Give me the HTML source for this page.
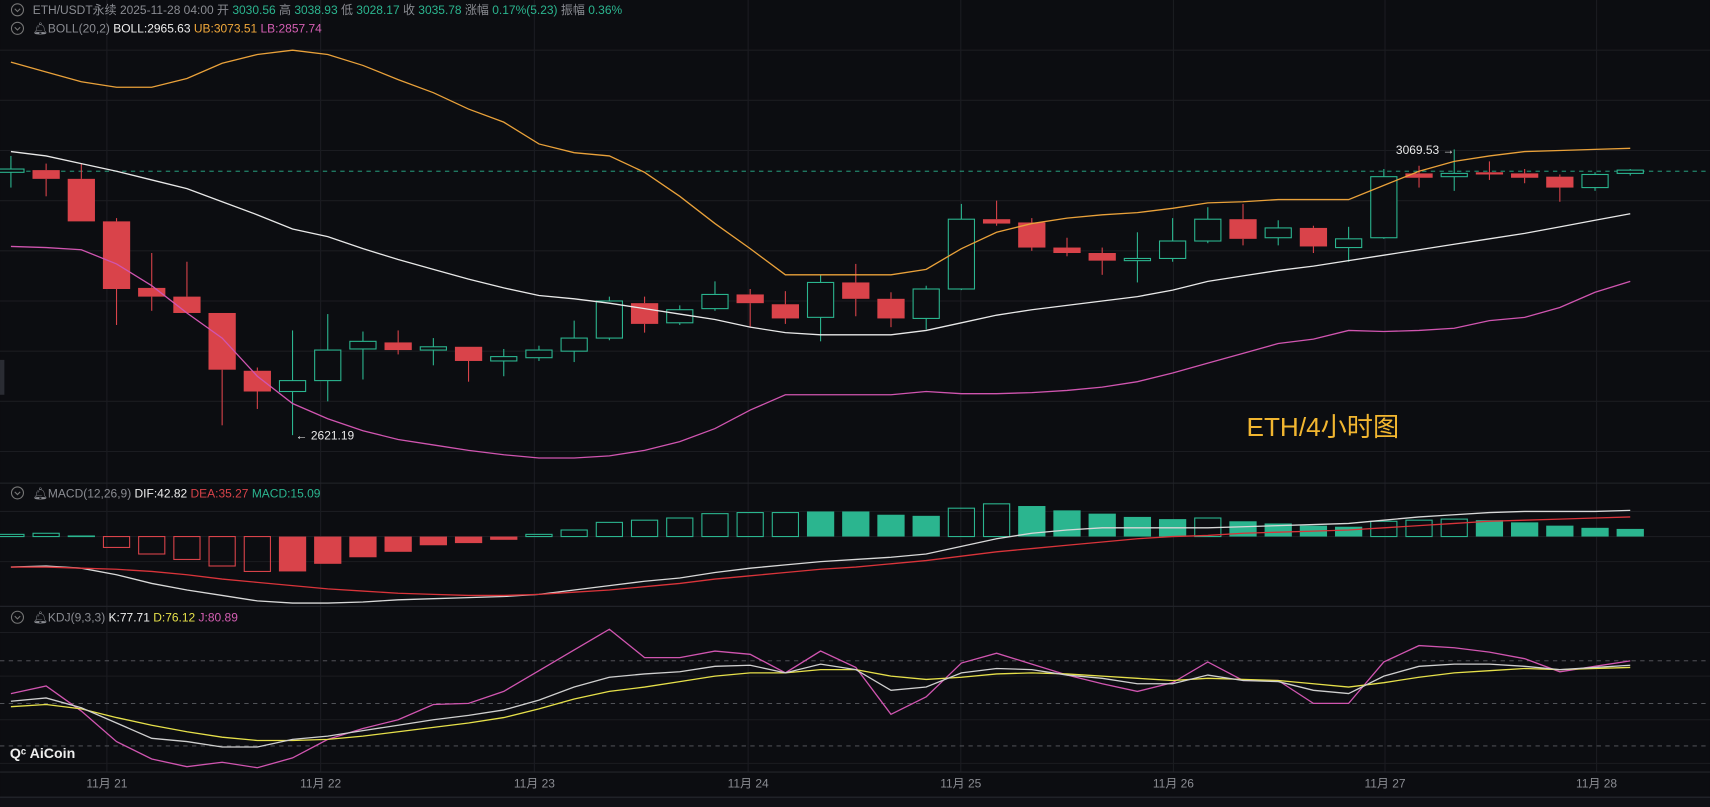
<!DOCTYPE html>
<html><head><meta charset="utf-8"><style>
html,body{margin:0;padding:0;background:#0c0d11;overflow:hidden}
svg{display:block}
text{font-family:"Liberation Sans","Noto Sans CJK SC",sans-serif}
</style></head><body>
<svg id="s" width="1710" height="807" viewBox="0 0 1568 740" xmlns="http://www.w3.org/2000/svg">
<rect width="1568" height="740" fill="#0c0d11"/>
<g id="grid" stroke="#1b1c21" stroke-width="1"></g>
<line x1="0" y1="443" x2="1568" y2="443" stroke="#23252b"/>
<line x1="0" y1="556" x2="1568" y2="556" stroke="#23252b"/>
<line x1="0" y1="708" x2="1568" y2="708" stroke="#23252b"/>
<rect x="0" y="731" width="1568" height="9" fill="#101116"/>
<line x1="0" y1="731" x2="1568" y2="731" stroke="#26282e"/>
<rect x="0" y="330" width="4" height="32" fill="#2a2c33"/>
<line x1="0" y1="157" x2="1568" y2="157" stroke="#2bb58f" stroke-dasharray="4,4" stroke-width="0.8"/>
<g stroke="#5b5d63" stroke-dasharray="4,4" stroke-width="0.8">
<line x1="0" y1="606" x2="1568" y2="606"/><line x1="0" y1="645" x2="1568" y2="645"/><line x1="0" y1="684" x2="1568" y2="684"/>
</g>
<g id="c"></g>
<g id="l" fill="none" stroke-width="1.2"></g>
<text x="1280" y="141" fill="#e8e8e8" font-size="11">3069.53 →</text>
<text x="271" y="403" fill="#e8e8e8" font-size="11">← 2621.19</text>
<text x="1143" y="400" fill="#f2b630" font-size="24">ETH/4小时图</text>
<g font-size="11">
<circle cx="16" cy="9" r="5.5" fill="none" stroke="#777"/><path d="M13.5 8l2.5 2.5 2.5-2.5" fill="none" stroke="#777"/>
<text x="30" y="13" fill="#8a8c92">ETH/USDT永续  2025-11-28 04:00  开 <tspan fill="#2bb58f">3030.56</tspan> 高 <tspan fill="#2bb58f">3038.93</tspan> 低 <tspan fill="#2bb58f">3028.17</tspan> 收 <tspan fill="#2bb58f">3035.78</tspan> 涨幅 <tspan fill="#2bb58f">0.17%(5.23)</tspan> 振幅 <tspan fill="#2bb58f">0.36%</tspan></text>
<circle cx="16" cy="26" r="5.5" fill="none" stroke="#777"/><path d="M13.5 25l2.5 2.5 2.5-2.5" fill="none" stroke="#777"/>
<text x="30" y="30" fill="#8a8c92">🔔︎BOLL(20,2)  <tspan fill="#eee">BOLL:2965.63</tspan>  <tspan fill="#f2a93b">UB:3073.51</tspan>  <tspan fill="#d55fb4">LB:2857.74</tspan></text>
<circle cx="16" cy="452" r="5.5" fill="none" stroke="#777"/><path d="M13.5 451l2.5 2.5 2.5-2.5" fill="none" stroke="#777"/>
<text x="30" y="456" fill="#8a8c92">🔔︎MACD(12,26,9)  <tspan fill="#eee">DIF:42.82</tspan>  <tspan fill="#d9434a">DEA:35.27</tspan>  <tspan fill="#2bb58f">MACD:15.09</tspan></text>
<circle cx="16" cy="566" r="5.5" fill="none" stroke="#777"/><path d="M13.5 565l2.5 2.5 2.5-2.5" fill="none" stroke="#777"/>
<text x="30" y="570" fill="#8a8c92">🔔︎KDJ(9,3,3)  <tspan fill="#eee">K:77.71</tspan>  <tspan fill="#e6e04a">D:76.12</tspan>  <tspan fill="#d55fb4">J:80.89</tspan></text>
</g>
<text x="9" y="695" fill="#eee" font-size="13" font-weight="bold">Qᶜ AiCoin</text>
<g id="xl" fill="#8a8c92" font-size="11"></g>
</svg>
<script>
const N="http://www.w3.org/2000/svg";
function el(p,t,a,txt){const e=document.createElementNS(N,t);for(const k in a)e.setAttribute(k,a[k]);if(txt)e.textContent=txt;p.appendChild(e);return e;}
const X=i=>10+32.28*i;
const g=document.getElementById('grid');
[46,92,138,184,230,276,322,368,414,469,492,515,580,620,660,700].forEach(y=>el(g,'line',{x1:0,x2:1568,y1:y,y2:y}));
const days=[98,294,490,686,881,1076,1270,1464];
days.forEach(x=>el(g,'line',{x1:x,x2:x,y1:0,y2:708}));
const xl=document.getElementById('xl');
['11月 21','11月 22','11月 23','11月 24','11月 25','11月 26','11月 27','11月 28'].forEach((t,i)=>el(xl,'text',{x:days[i],y:722,'text-anchor':'middle'},t));
const G='#2bb58f',R='#d9434a';
const C=[[1,155,158,143,172],[0,156,164,150,180],[0,164,203,150,203],[0,203,265,200,298],[0,264,272,232,285],[0,272,287,240,287],[0,287,339,287,390],[0,340,359,337,375],[1,349,359,303,399],[1,321,349,288,368],[1,313,320,304,348],[0,314,321,303,325],[1,318,321,310,335],[0,318,331,318,350],[1,327,331,320,345],[1,321,328,317,331],[1,310,322,294,332],[1,276,310,272,312],[0,278,297,272,305],[1,284,296,280,298],[1,270,283,258,285],[0,270,278,265,300],[0,279,292,267,297],[1,259,291,252,313],[0,259,274,242,290],[0,274,292,268,300],[1,265,292,262,302],[1,201,265,187,266],[0,201,205,184,207],[0,204,227,200,230],[0,227,232,218,235],[0,232,239,227,252],[1,237,239,213,259],[1,221,237,200,240],[1,201,221,190,223],[0,201,219,187,225],[1,209,218,202,225],[0,209,226,207,232],[1,219,227,208,240],[1,162,218,155,219],[0,159,163,152,172],[1,159,162,137,175],[0,158,160,148,165],[0,159,163,155,168],[0,162,172,160,185],[1,160,172,158,175],[1,156,159,155,161]];
const c=document.getElementById('c');
C.forEach((d,i)=>{const x=X(i),col=d[0]?G:R;
el(c,'line',{x1:x,x2:x,y1:d[3],y2:d[1],stroke:col});el(c,'line',{x1:x,x2:x,y1:d[2],y2:d[4],stroke:col});
const h=Math.max(d[2]-d[1],1.5);
if(d[0])el(c,'rect',{x:x-12,y:d[1],width:24,height:h,fill:'#0c0d11',stroke:col});
else el(c,'rect',{x:x-12.5,y:d[1],width:25,height:h,fill:col});});
const H=[[490,0],[489,0],[491,1],[502,0],[508,0],[513,0],[519,0],[524,0],[524,1],[517,1],[511,1],[506,1],[500,1],[498,1],[495,1],[490,0],[486,0],[479,0],[477,0],[475,0],[471,0],[470,0],[470,0],[469,1],[469,1],[472,1],[473,1],[466,0],[462,0],[464,1],[468,1],[471,1],[474,1],[476,1],[475,0],[478,1],[480,1],[482,1],[483,1],[478,0],[477,0],[476,0],[477,1],[479,1],[482,1],[484,1],[485,1]];
H.forEach((h,i)=>{const x=X(i),z=492,pos=h[0]<z,col=pos?G:R,y=Math.min(h[0],z),ht=Math.max(Math.abs(h[0]-z),1.5);
if(h[1])el(c,'rect',{x:x-12.5,y:y,width:25,height:ht,fill:col});else el(c,'rect',{x:x-12,y:y,width:24,height:ht,fill:'none',stroke:col});});
const l=document.getElementById('l');
function line(ys,col){el(l,'polyline',{points:ys.map((y,i)=>X(i)+','+y).join(' '),stroke:col});}
line([57,66,75,80,80,72,58,50,46,50,60,73,85,100,112,132,140,143,158,180,205,228,252,252,252,252,247,228,213,205,200,197,195,191,186,185,183,183,183,170,157,148,143,139,138,137,136],'#e9a13a');
line([139,143,150,157,165,173,185,197,210,217,228,238,247,256,264,271,274,278,283,288,293,300,305,307,307,307,303,296,289,284,280,276,272,266,258,253,248,244,239,234,229,224,219,214,208,202,196],'#e8e8e8');
line([226,227,229,242,262,287,310,345,370,384,395,403,408,413,417,420,420,418,413,405,393,376,362,362,362,362,359,361,361,360,358,355,350,342,333,324,315,311,303,304,303,301,294,291,282,268,258],'#d055b0');
line([520,519,521,527,535,541,546,551,553,553,552,550,549,548,547,545,541,537,533,530,525,521,518,515,513,511,508,501,494,489,486,484,484,484,484,483,482,481,480,477,474,472,470,469,469,469,468],'#d8d8d8');
line([520,520,521,522,524,527,531,534,537,540,542,544,545,546,546,545,543,541,538,535,531,528,525,522,520,517,514,510,506,503,500,497,494,492,491,489,488,487,486,484,482,480,478,477,476,475,474],'#d9343a');
line([636,629,652,680,696,703,699,704,695,678,668,660,646,645,634,615,596,577,603,603,597,600,617,597,612,655,639,608,599,609,619,627,634,626,607,624,624,645,645,607,592,594,598,604,616,611,606],'#d055b0');
line([648,646,650,658,665,671,676,679,679,678,675,671,667,663,658,650,641,634,630,625,620,617,617,614,614,620,623,621,618,617,618,620,622,624,622,623,624,627,630,626,621,617,615,613,614,613,612],'#e6e04a');
line([643,640,649,663,677,680,685,685,678,675,670,665,660,656,651,642,630,621,618,616,611,610,617,609,614,633,630,617,613,614,619,622,627,627,619,624,625,633,636,620,611,609,609,611,614,612,610],'#cfcfcf');
</script>
</body></html>
